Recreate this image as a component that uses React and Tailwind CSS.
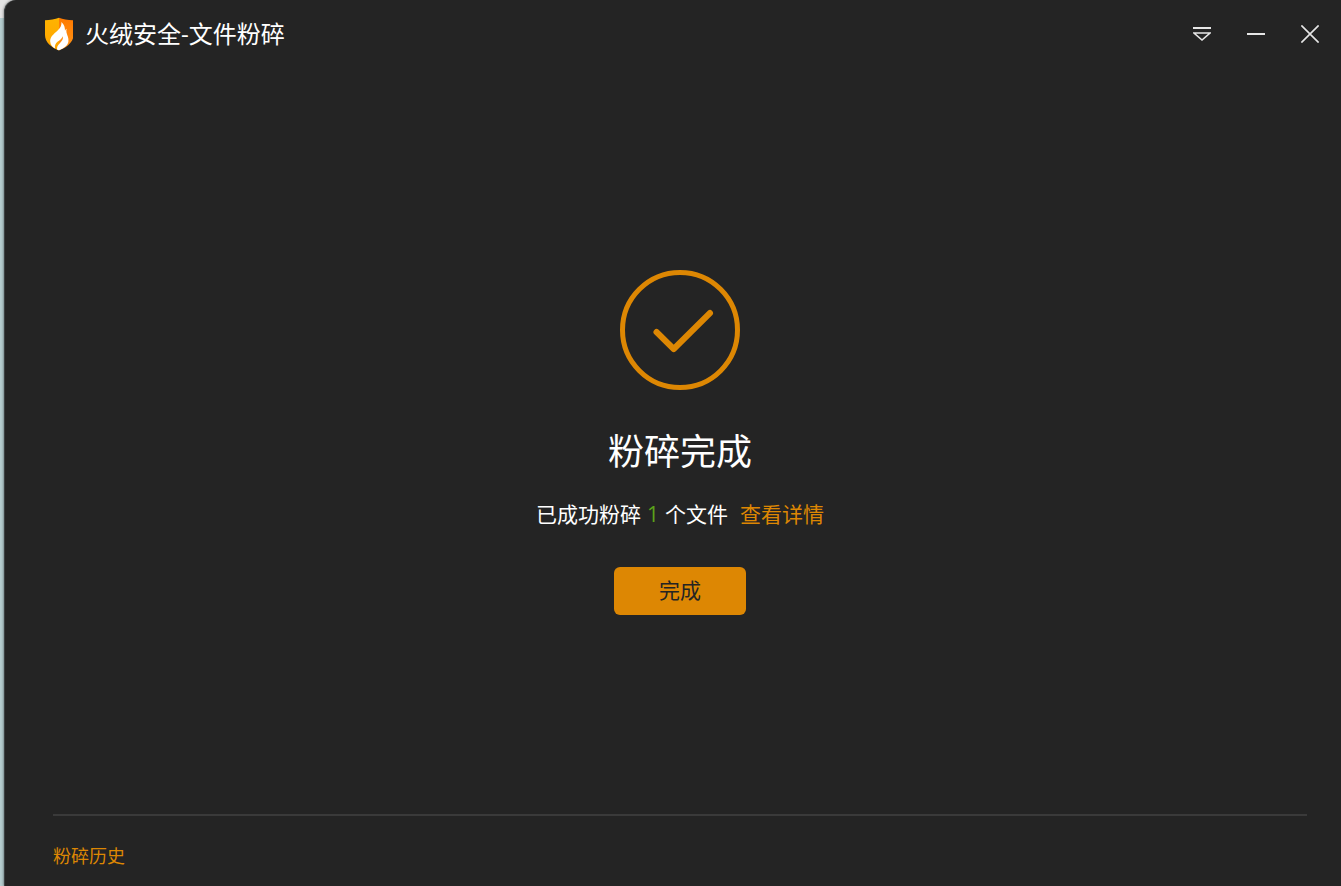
import { useId } from 'react';

function ShieldLogo() {
  const id = useId();
  return (
    <svg viewBox="0 0 28 34" className="h-[34px] w-7 shrink-0" aria-hidden="true">
      <defs>
        <linearGradient id={`${id}-left`} x1="0" y1="0" x2="0" y2="1">
          <stop offset="0" stopColor="#ffb400" />
          <stop offset="1" stopColor="#ffa400" />
        </linearGradient>
        <linearGradient id={`${id}-right`} x1="0" y1="0" x2="0" y2="1">
          <stop offset="0" stopColor="#ff7a00" />
          <stop offset="1" stopColor="#ff9417" />
        </linearGradient>
      </defs>
      <path d="M14 0.8C10 2.4 5 3.2 0 3.2V18C0 25 6 30.5 14 33.4Z" fill={`url(#${id}-left)`} />
      <path d="M14 0.8C18 2.4 23 3.2 28.5 3.2V18C28.5 25 22 30.5 14 33.4Z" fill={`url(#${id}-right)`} />
      <path
        d="M16.4 5C16.8 9.6 14.4 12 11 15C7.6 18 5 20.4 5.2 24.4C5.4 27.6 7.4 30 10 31.6C9.6 28.6 10.2 26.8 12.8 24.6C15 22.8 17 21.6 17.8 19.2C18.4 22 17 24 14.8 26.2C12.4 28.6 11.6 30.4 12.2 32.8L14 33.2C18.6 31.4 22.8 28.6 23.4 24.4C23.9 21 22.2 18.6 21.5 15.6C21.2 14.2 21.3 13 21.6 11.8C20.6 12.4 20.2 13.2 20 14C20.1 10.6 19.2 7.4 16.4 5Z"
        fill="#fff"
      />
    </svg>
  );
}

function MenuIcon() {
  return (
    <svg viewBox="0 0 18 18" className="h-[18px] w-[18px]" fill="none" stroke="#e6e6e6" strokeWidth="1.6">
      <path d="M0 3H18" strokeWidth="2" />
      <path d="M1 8H17L9 15Z" />
    </svg>
  );
}

function MinimizeIcon() {
  return (
    <svg viewBox="0 0 18 18" className="h-[18px] w-[18px]" stroke="#e6e6e6" strokeWidth="2">
      <path d="M0 9H18" />
    </svg>
  );
}

function CloseIcon() {
  return (
    <svg viewBox="0 0 18 18" className="h-[18px] w-[18px]" stroke="#e6e6e6" strokeWidth="1.6">
      <path d="M0.4 0.4L17.6 17.6M17.6 0.4L0.4 17.6" />
    </svg>
  );
}

function SuccessIcon() {
  return (
    <svg viewBox="0 0 120 120" className="h-[120px] w-[120px]" fill="none" stroke="#dd8703" aria-hidden="true">
      <circle cx="60" cy="60" r="57.5" strokeWidth="5" />
      <path d="M36.5 62L53.7 79L90 43" strokeWidth="6" strokeLinecap="round" strokeLinejoin="round" />
    </svg>
  );
}

const windowButtons = [
  { label: '菜单', Icon: MenuIcon },
  { label: '最小化', Icon: MinimizeIcon },
  { label: '关闭', Icon: CloseIcon },
];

export default function App() {
  return (
    <div className="flex min-h-screen bg-linear-to-b from-[#e4e4e4] from-[18px] to-[#b5cdcf] to-[18px] pl-1 font-['Open_Sans','Noto_Sans_CJK_SC',sans-serif]">
      <div className="flex flex-1 flex-col rounded-tl-xl border-l border-[#3c4142] bg-[#242424] text-white shadow-[0_0_3px_#00000099]">
        <header className="flex h-[68px] items-center justify-between pr-3.5 pl-10">
          <div className="flex items-center gap-3">
            <ShieldLogo />
            <h1 className="text-2xl">火绒安全-文件粉碎</h1>
          </div>
          <div className="flex gap-5">
            {windowButtons.map(({ label, Icon }) => (
              <button key={label} type="button" aria-label={label} className="p-2 hover:bg-white/10">
                <Icon />
              </button>
            ))}
          </div>
        </header>

        <div className="flex flex-1 flex-col pr-[34px] pl-12">
          <main className="flex flex-1 flex-col items-center justify-center pt-[3px]">
            <SuccessIcon />
            <h2 className="mt-9 text-4xl leading-[52px]">粉碎完成</h2>
            <p className="mt-5 flex text-[21px] leading-8">
              <span>已成功粉碎</span>
              <span className="mx-1.5 text-[#5ba319]">1</span>
              <span>个文件</span>
              <a href="#details" className="ml-3 text-[#dd8703]">查看详情</a>
            </p>
            <button type="button" className="mt-[37px] h-12 w-[132px] rounded-md bg-[#dd8703] text-[21px] text-[#242424]">
              完成
            </button>
          </main>
          <footer className="border-t-2 border-[#3a3a3a] pt-[26px] pb-4">
            <a href="#history" className="block text-lg leading-7 text-[#dd8703]">粉碎历史</a>
          </footer>
        </div>
      </div>
    </div>
  );
}
